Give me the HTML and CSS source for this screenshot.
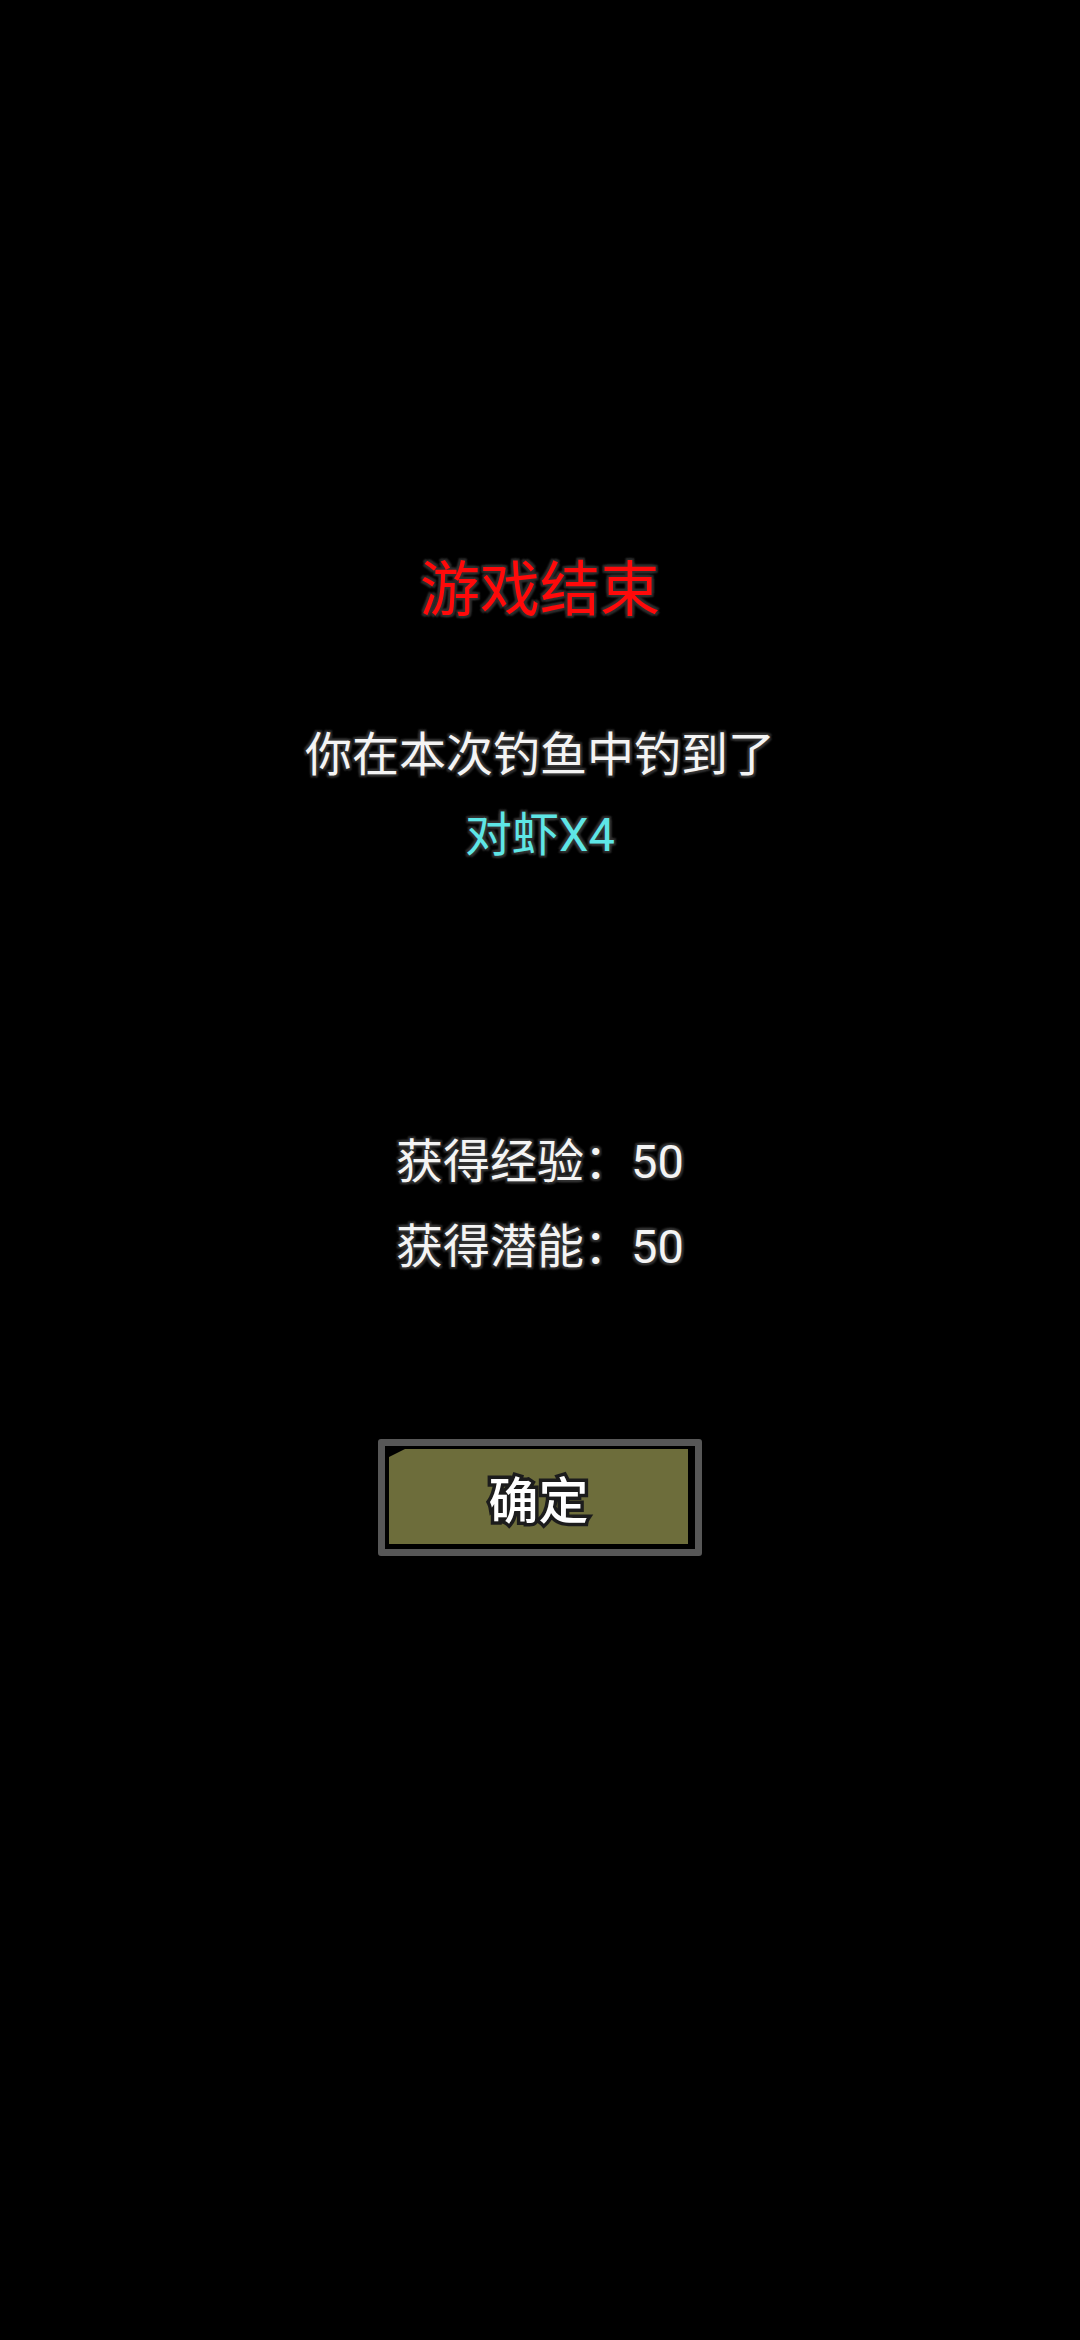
FILE: index.html
```html
<!DOCTYPE html>
<html lang="zh-CN">
<head>
<meta charset="utf-8">
<link rel="stylesheet" href="styles.css">
</head>
<body>
<main class="screen">
  <h1 class="title">游戏结束</h1>
  <p class="line msg">你在本次钓鱼中钓到了</p>
  <p class="line catch">对虾X4</p>
  <div class="stats">
    <p class="stat">获得经验：50</p>
    <p class="stat">获得潜能：50</p>
  </div>
  <div class="btn-frame">
    <div class="btn">确定</div>
  </div>
</main>
</body>
</html>
```

FILE: styles.css
```css
html, body {
  margin: 0;
  padding: 0;
  background: #000;
}
.screen {
  width: 1080px;
  height: 2340px;
  display: flex;
  flex-direction: column;
  align-items: center;
  padding-top: 551px;
  box-sizing: border-box;
  font-family: Roboto, "Noto Sans CJK SC", "Noto Sans", sans-serif;
  color: #fff;
}
.title {
  margin: 0;
  font-size: 60px;
  font-weight: 400;
  line-height: 80px;
  color: #ff0a0a;
  text-shadow: 0 0 3px #333, 0 0 4px #333, 2px 2px 2px #2a2a2a, -2px -2px 2px #2a2a2a, 2px -2px 2px #2a2a2a, -2px 2px 2px #2a2a2a;
}
.line {
  margin: 0;
  font-size: 47px;
  line-height: 80px;
  text-shadow: 0 0 3px #3a3a3a, 0 0 4px #3a3a3a, 2px 2px 2px #2a2a2a, -2px -2px 2px #2a2a2a, 2px -2px 2px #2a2a2a, -2px 2px 2px #2a2a2a;
}
.msg {
  margin-top: 84px;
  color: #f4f4f4;
}
.catch {
  color: #5ee6e6;
}
.stats {
  margin-top: 244px;
  display: flex;
  flex-direction: column;
  align-items: center;
}
.stat {
  margin: 0;
  font-size: 47px;
  line-height: 85px;
  color: #f4f4f4;
  text-shadow: 0 0 3px #3a3a3a, 0 0 4px #3a3a3a, 2px 2px 2px #2a2a2a, -2px -2px 2px #2a2a2a, 2px -2px 2px #2a2a2a, -2px 2px 2px #2a2a2a;
}
.btn-frame {
  margin-top: 150px;
  width: 324px;
  height: 117px;
  box-sizing: border-box;
  border: 7px solid #575757;
  border-radius: 3px;
  background: #000;
  padding: 3px 7px 5px 4px;
  display: flex;
}
.btn {
  flex: 1;
  background: #6d6d3b;
  clip-path: polygon(0 8px, 16px 0, 100% 0, 100% 100%, 0 100%);
  display: flex;
  align-items: center;
  justify-content: center;
  font-size: 50px;
  font-weight: 500;
  color: #fff;
  -webkit-text-stroke: 7px #1c1c1c;
  paint-order: stroke fill;
}
```
